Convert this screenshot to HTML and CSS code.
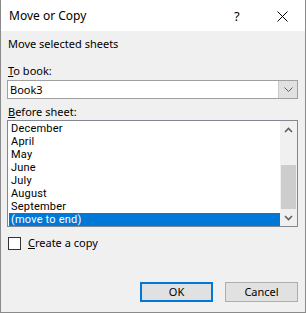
FILE: index.html
```html
<!DOCTYPE html>
<html lang="en">
<head>
    <meta charset="UTF-8">
    <title>Move or Copy</title>
    <link rel="stylesheet" href="styles.css">
</head>
<body>
    <div class="dialog">
        <div class="titlebar">
            <span class="title">Move or Copy</span>
            <span class="help">?</span>
            <span class="close">
                <svg width="11" height="11" viewBox="0 0 11 11">
                    <path d="M0.5 0.5 L10.5 10.5 M10.5 0.5 L0.5 10.5" stroke="#000" stroke-width="1" fill="none"/>
                </svg>
            </span>
        </div>

        <div class="content">
            <div class="heading">Move selected sheets</div>

            <div class="label"><u>T</u>o book:</div>
            <div class="combo">
                <span class="combo-value">Book3</span>
                <span class="combo-btn">
                    <svg width="9" height="5" viewBox="0 0 9 5">
                        <path d="M0.5 0.5 L4.5 4.5 L8.5 0.5" stroke="#606060" stroke-width="1" fill="none"/>
                    </svg>
                </span>
            </div>

            <div class="label label-sheet"><u>B</u>efore sheet:</div>
            <div class="listbox">
                <ul class="items">
                    <li>December</li>
                    <li>April</li>
                    <li>May</li>
                    <li>June</li>
                    <li>July</li>
                    <li>August</li>
                    <li>September</li>
                    <li class="selected">(move to end)</li>
                </ul>
                <div class="scrollbar">
                    <span class="arrow">
                        <svg width="9" height="6" viewBox="0 0 9 6">
                            <path d="M1 5 L4.5 1.5 L8 5" stroke="#606060" stroke-width="1.6" fill="none"/>
                        </svg>
                    </span>
                    <div class="track"><div class="thumb"></div></div>
                    <span class="arrow">
                        <svg width="9" height="6" viewBox="0 0 9 6">
                            <path d="M1 1 L4.5 4.5 L8 1" stroke="#606060" stroke-width="1.6" fill="none"/>
                        </svg>
                    </span>
                </div>
            </div>

            <label class="check">
                <span class="box"></span>
                <span><u>C</u>reate a copy</span>
            </label>

            <div class="buttons">
                <button class="btn btn-default">OK</button>
                <button class="btn">Cancel</button>
            </div>
        </div>
    </div>
</body>
</html>
```

FILE: styles.css
```css
body, html {
    margin: 0;
    padding: 0;
    font-family: "Noto Sans", "Open Sans", sans-serif;
    font-size: 11px;
    color: #000;
    background-color: #f0f0f0;
}

.dialog {
    width: 306px;
    height: 313px;
    box-sizing: border-box;
    border: 1px solid #8a8a8a;
    border-top: none;
    background-color: #f0f0f0;
    display: flex;
    flex-direction: column;
}

.titlebar {
    height: 31px;
    background-color: #fff;
    display: flex;
    align-items: center;
    padding-left: 8px;
}

.title {
    flex: 1;
    font-size: 12px;
}

.help {
    width: 43px;
    font-size: 13px;
}

.close {
    width: 28px;
    display: flex;
    padding-top: 1px;
}

.content {
    flex: 1;
    display: flex;
    flex-direction: column;
    padding: 0 7px 0 6px;
}

.heading {
    margin-top: 5px;
    line-height: 16px;
    padding-left: 1px;
}

.label {
    margin-top: 11px;
    line-height: 16px;
    padding-left: 1px;
}

.label-sheet {
    margin-top: 5px;
}

.combo {
    margin-top: 1px;
    height: 19px;
    box-sizing: border-box;
    border: 1px solid #a0a0a0;
    background-color: #fff;
    display: flex;
}

.combo-value {
    flex: 1;
    line-height: 17px;
    padding-left: 2px;
}

.combo-btn {
    width: 18px;
    background-color: #e1e1e1;
    border-left: 1px solid #c8c8c8;
    display: flex;
    align-items: center;
    justify-content: center;
}

.listbox {
    height: 107px;
    box-sizing: border-box;
    border: 1px solid #828790;
    background-color: #fff;
    display: flex;
}

.items {
    list-style: none;
    margin: 0;
    padding: 1px 0 0 1px;
    flex: 1;
    font-family: Roboto, "Noto Sans", sans-serif;
    font-size: 11px;
    letter-spacing: 0.2px;
}

.items li {
    height: 13px;
    line-height: 13px;
    padding-left: 2px;
}

.items li.selected {
    background-color: #0078d7;
    color: #fff;
}

.scrollbar {
    width: 17px;
    background-color: #f0f0f0;
    display: flex;
    flex-direction: column;
}

.arrow {
    height: 17px;
    display: flex;
    align-items: center;
    justify-content: center;
}

.track {
    flex: 1;
    display: flex;
    flex-direction: column;
    justify-content: flex-end;
}

.thumb {
    height: 44px;
    margin: 0 1px;
    background-color: #cdcdcd;
}

.check {
    margin-top: 8px;
    display: flex;
    align-items: center;
    line-height: 16px;
}

.box {
    width: 11px;
    height: 11px;
    border: 1px solid #333;
    background-color: #fff;
    margin-left: 1px;
    margin-right: 7px;
}

.buttons {
    margin-top: auto;
    margin-bottom: 10px;
    display: flex;
    justify-content: flex-end;
    gap: 12px;
}

.btn {
    width: 73px;
    height: 20px;
    box-sizing: border-box;
    border: 1px solid #adadad;
    background-color: #e1e1e1;
    font-family: "Noto Sans", "Open Sans", sans-serif;
    font-size: 11px;
    padding: 0;
    line-height: 16px;
    color: #000;
}

.btn-default {
    border: 2px solid #0078d7;
}
```
